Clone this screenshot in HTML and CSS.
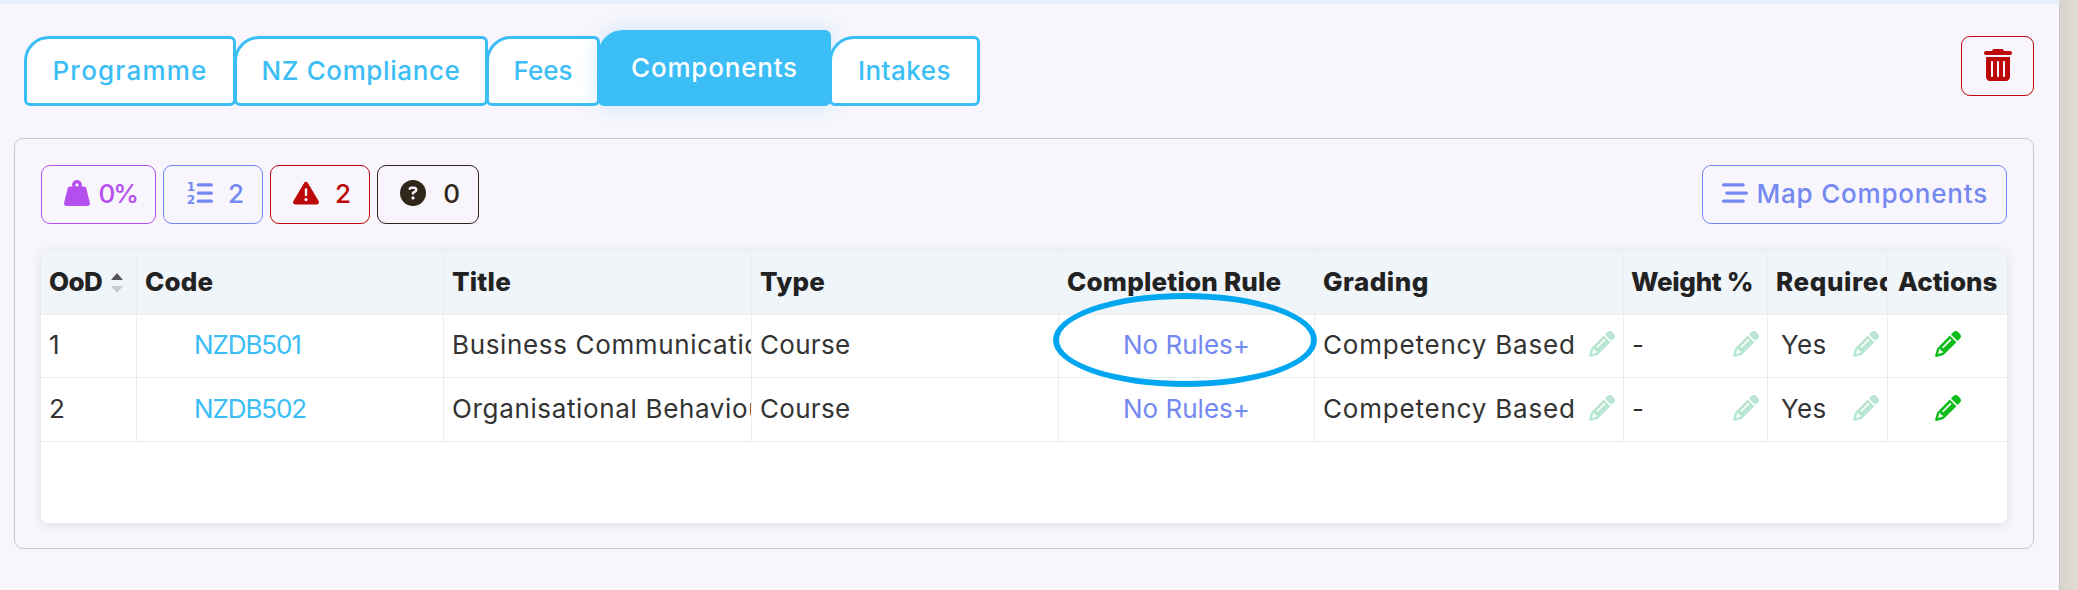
FILE: index.html
```
<!DOCTYPE html>
<html lang="en">
<head>
    <meta charset="UTF-8">
    <meta name="viewport" content="width=device-width, initial-scale=1.0">
    <title>Programme | Components</title>
    <link rel="stylesheet" href="styles.css">
</head>
<body>
    <!-- shared icons -->
    <svg class="sprite" width="0" height="0">
        <symbol id="pencil" viewBox="0 0 512 512">
            <path d="M410.3 231l11.3-11.3-33.9-33.9-62.1-62.1L291.7 89.8l-11.3 11.3-22.6 22.6L58.6 322.9c-10.4 10.4-18 23.3-22.2 37.4L1 480.7c-2.5 8.4-.2 17.5 6.1 23.7s15.3 8.5 23.7 6.1l120.3-35.4c14.1-4.2 27-11.8 37.4-22.2L387.7 253.7 410.3 231zM160 399.4l-9.1 22.7c-4 3.1-8.5 5.4-13.3 6.9L59.4 452l23-78.1c1.4-4.9 3.8-9.4 6.9-13.3l22.7-9.1v32c0 8.8 7.2 16 16 16h32zM362.7 18.7L348.3 33.2 325.7 55.8 314.3 67.1l33.9 33.9 62.1 62.1 33.9 33.9 11.3-11.3 22.6-22.6 14.5-14.5c25-25 25-65.5 0-90.5L453.3 18.7c-25-25-65.5-25-90.5 0zm-47.4 168l-144 144c-6.2 6.2-16.4 6.2-22.6 0s-6.2-16.4 0-22.6l144-144c6.2-6.2 16.4-6.2 22.6 0s6.2 16.4 0 22.6z"/>
        </symbol>
    </svg>

    <div class="page">
        <div class="topbar">
            <nav class="tabs">
                <a class="tab tab-programme">Programme</a>
                <a class="tab tab-compliance">NZ Compliance</a>
                <a class="tab tab-fees">Fees</a>
                <a class="tab tab-components active">Components</a>
                <a class="tab tab-intakes">Intakes</a>
            </nav>
            <button type="button" class="btn btn-delete" aria-label="Delete">
                <svg class="icon-trash" viewBox="0 0 448 512"><path d="M135.2 17.7C140.6 6.8 151.7 0 163.8 0H284.2c12.1 0 23.2 6.8 28.6 17.7L320 32h96c17.7 0 32 14.3 32 32s-14.3 32-32 32H32C14.3 96 0 81.7 0 64S14.3 32 32 32h96l7.2-14.3zM32 128H416V448c0 35.3-28.7 64-64 64H96c-35.3 0-64-28.7-64-64V128zm96 64c-8.8 0-16 7.2-16 16V432c0 8.8 7.2 16 16 16s16-7.2 16-16V208c0-8.8-7.2-16-16-16zm96 0c-8.8 0-16 7.2-16 16V432c0 8.8 7.2 16 16 16s16-7.2 16-16V208c0-8.8-7.2-16-16-16zm96 0c-8.8 0-16 7.2-16 16V432c0 8.8 7.2 16 16 16s16-7.2 16-16V208c0-8.8-7.2-16-16-16z"/></svg>
            </button>
        </div>

        <section class="panel">
            <div class="toolbar">
                <button type="button" class="btn stat stat-weight">
                    <svg class="icon" viewBox="0 0 512 512"><path d="M224 96a32 32 0 1 1 64 0 32 32 0 1 1 -64 0zm122.5 32c3.5-10 5.5-20.8 5.5-32c0-53-43-96-96-96s-96 43-96 96c0 11.2 1.9 22 5.5 32H120c-22 0-41.2 15-46.6 36.4l-72 288c-3.6 14.3-.4 29.5 8.7 41.2S33.2 512 48 512H464c14.8 0 28.7-6.8 37.8-18.5s12.3-26.8 8.7-41.2l-72-288C433.2 143 414 128 392 128H346.5z"/></svg>
                    <span>0%</span>
                </button>
                <button type="button" class="btn stat stat-count">
                    <svg class="icon" viewBox="0 0 512 512">
                        <text class="list-digit" x="-4" y="224">1</text>
                        <text class="list-digit" x="-4" y="482">2</text>
                        <path d="M224 64H480a32 32 0 0 1 0 64H224a32 32 0 0 1 0-64zM224 224H480a32 32 0 0 1 0 64H224a32 32 0 0 1 0-64zM224 384H480a32 32 0 0 1 0 64H224a32 32 0 0 1 0-64z"/>
                    </svg>
                    <span>2</span>
                </button>
                <button type="button" class="btn stat stat-warning">
                    <svg class="icon" viewBox="0 0 512 512"><path d="M256 32c14.2 0 27.3 7.5 34.5 19.8l216 368c7.3 12.4 7.3 27.7 .2 40.1S486.3 480 472 480H40c-14.3 0-27.6-7.7-34.7-20.1s-7-27.8 .2-40.1l216-368C228.7 39.5 241.8 32 256 32zm0 128c-13.3 0-24 10.7-24 24V296c0 13.3 10.7 24 24 24s24-10.7 24-24V184c0-13.3-10.7-24-24-24zm32 224a32 32 0 1 0 -64 0 32 32 0 1 0 64 0z"/></svg>
                    <span>2</span>
                </button>
                <button type="button" class="btn stat stat-unknown">
                    <svg class="icon" viewBox="0 0 512 512"><path d="M256 512A256 256 0 1 0 256 0a256 256 0 1 0 0 512zM169.8 165.3c7.9-22.3 29.1-37.3 52.8-37.3h58.3c34.9 0 63.1 28.3 63.1 63.1c0 22.6-12.1 43.5-31.7 54.8L280 264.4c-.2 13-10.9 23.6-24 23.6c-13.3 0-24-10.7-24-24V250.5c0-8.6 4.6-16.5 12.1-20.8l44.3-25.4c4.7-2.7 7.6-7.7 7.6-13.1c0-8.4-6.8-15.1-15.1-15.1H222.6c-3.4 0-6.4 2.1-7.5 5.3l-.4 1.2c-4.4 12.5-18.2 19-30.6 14.6s-19-18.2-14.6-30.6l.4-1.2zM224 352a32 32 0 1 1 64 0 32 32 0 1 1 -64 0z"/></svg>
                    <span>0</span>
                </button>
                <button type="button" class="btn btn-map">
                    <svg class="icon" viewBox="0 0 512 512"><path d="M0 96C0 78.3 14.3 64 32 64H416c17.7 0 32 14.3 32 32s-14.3 32-32 32H32C14.3 128 0 113.7 0 96zM64 256c0-17.7 14.3-32 32-32H480c17.7 0 32 14.3 32 32s-14.3 32-32 32H96c-17.7 0-32-14.3-32-32zM448 416c0 17.7-14.3 32-32 32H32c-17.7 0-32-14.3-32-32s14.3-32 32-32H416c17.7 0 32 14.3 32 32z"/></svg>
                    <span>Map Components</span>
                </button>
            </div>

            <div class="table-card">
                <table>
                    <colgroup>
                        <col class="col-ood">
                        <col class="col-code">
                        <col class="col-title">
                        <col class="col-type">
                        <col class="col-rule">
                        <col class="col-grading">
                        <col class="col-weight">
                        <col class="col-required">
                        <col class="col-actions">
                    </colgroup>
                    <thead>
                        <tr>
                            <th><div class="sortable">OoD <svg class="sort" viewBox="0 0 12 20"><path class="sort-up" d="M6 0L12 7H0z"/><path class="sort-down" d="M0 13H12L6 20z"/></svg></div></th>
                            <th>Code</th>
                            <th>Title</th>
                            <th>Type</th>
                            <th>Completion Rule</th>
                            <th class="grading-head">Grading</th>
                            <th class="weight-head">Weight %</th>
                            <th class="required-head">Required</th>
                            <th class="actions-head">Actions</th>
                        </tr>
                    </thead>
                    <tbody>
                        <tr>
                            <td>1</td>
                            <td class="code"><a>NZDB501</a></td>
                            <td class="title">Business Communication</td>
                            <td>Course</td>
                            <td class="rule"><a>No Rules+</a><span class="highlight"></span></td>
                            <td><div class="editable"><span class="grading">Competency Based</span><svg class="edit"><use href="#pencil"/></svg></div></td>
                            <td><div class="editable"><span>-</span><svg class="edit"><use href="#pencil"/></svg></div></td>
                            <td><div class="editable yes"><span>Yes</span><svg class="edit"><use href="#pencil"/></svg></div></td>
                            <td class="actions"><svg class="edit"><use href="#pencil"/></svg></td>
                        </tr>
                        <tr>
                            <td>2</td>
                            <td class="code"><a>NZDB502</a></td>
                            <td class="title">Organisational Behaviour</td>
                            <td>Course</td>
                            <td class="rule"><a>No Rules+</a></td>
                            <td><div class="editable"><span class="grading">Competency Based</span><svg class="edit"><use href="#pencil"/></svg></div></td>
                            <td><div class="editable"><span>-</span><svg class="edit"><use href="#pencil"/></svg></div></td>
                            <td><div class="editable yes"><span>Yes</span><svg class="edit"><use href="#pencil"/></svg></div></td>
                            <td class="actions"><svg class="edit"><use href="#pencil"/></svg></td>
                        </tr>
                    </tbody>
                </table>
            </div>
        </section>
    </div>
</body>
</html>
```
FILE: styles.css
```
:root {
    --color-sky: #3bbdf5;
    --color-indigo: #7488f2;
    --color-red: #bc0808;
    --color-purple: #b44fee;
    --color-dark: #30261a;
    --color-background: #f8f6fc;
    --color-text: #333;
}
* {
    box-sizing: border-box;
}
body {
    font-family: 'Inter', sans-serif;
    font-size: 26px;
    line-height: 1.5;
    color: var(--color-text);
    background: linear-gradient(to right, #d9d5ce 2060px, #e0dcd5 2078px);
    margin: 0;
    height: 590px;
    overflow: hidden;
}
.sprite {
    display: block;
}
.page {
    width: 2060px;
    height: 590px;
    padding: 26px 25px 0 14px;
    background-color: var(--color-background);
    border-top: 4px solid #e6f0fa;
    border-right: 1px solid #c9c8cd;
}
svg {
    fill: currentColor;
    flex: none;
}

/* Tabs */
.topbar {
    display: flex;
    justify-content: space-between;
    align-items: flex-start;
    height: 108px;
}
.tabs {
    display: flex;
    align-items: flex-end;
    height: 76px;
    padding-left: 10px;
}
.tab {
    display: flex;
    align-items: center;
    justify-content: center;
    height: 70px;
    padding-bottom: 1px;
    border: 3px solid var(--color-sky);
    border-radius: 25px 6px 6px 6px;
    background-color: white;
    color: var(--color-sky);
    font-weight: 500;
    white-space: nowrap;
}
.tab + .tab {
    margin-left: -2px;
}
.tab-programme {
    width: 212px;
    letter-spacing: 1.2px;
}
.tab-compliance {
    width: 254px;
    letter-spacing: 0.6px;
}
.tab-fees {
    width: 114px;
}
.tab-components {
    width: 233px;
    letter-spacing: 0.8px;
}
.tab-intakes {
    width: 151px;
    letter-spacing: 0.5px;
}
.tab.active {
    height: 76px;
    background-color: var(--color-sky);
    color: white;
    box-shadow: 0 0 20px rgba(59, 189, 245, 0.25);
}

/* Buttons */
.btn {
    display: flex;
    align-items: center;
    height: 59px;
    padding: 0;
    border: 1px solid currentColor;
    border-radius: 9px;
    background: none;
    font: inherit;
    font-weight: 500;
    white-space: nowrap;
}
.btn-delete {
    width: 73px;
    height: 60px;
    margin-top: 6px;
    padding-bottom: 2px;
    justify-content: center;
    color: var(--color-red);
}
.icon {
    width: 26px;
    height: 26px;
}
.icon-trash {
    width: 28px;
    height: 32px;
}
.toolbar {
    display: flex;
    gap: 7px;
    height: 59px;
}
.stat {
    width: 100px;
    padding: 0 18px 3px 22px;
    justify-content: space-between;
}
.stat-weight {
    width: 115px;
    color: var(--color-purple);
    letter-spacing: -2px;
}
.stat-count {
    padding-left: 23px;
    color: var(--color-indigo);
}
.stat-warning {
    color: var(--color-red);
}
.stat-unknown {
    width: 102px;
    color: var(--color-dark);
}
.list-digit {
    font-family: 'DejaVu Sans', sans-serif;
    font-size: 240px;
    font-weight: 700;
    letter-spacing: 0;
}
.btn-map {
    width: 305px;
    margin-left: auto;
    padding: 0 18px 3px 19px;
    justify-content: space-between;
    color: var(--color-indigo);
    letter-spacing: 0.8px;
}

/* Components table */
.panel {
    height: 411px;
    padding: 26px;
    border: 1px solid #c9c8cd;
    border-radius: 9px;
}
.table-card {
    height: 273px;
    margin-top: 26px;
    border-radius: 6px;
    background-color: white;
    box-shadow: 0 2px 10px rgba(60, 40, 80, 0.13);
}
table {
    width: 1966px;
    table-layout: fixed;
    border-collapse: separate;
    border-spacing: 0;
}
.col-ood {
    width: 96px;
}
.col-code, .col-type {
    width: 307px;
}
.col-title {
    width: 308px;
}
.col-rule {
    width: 256px;
}
.col-grading {
    width: 309px;
}
.col-weight {
    width: 144px;
}
.col-required {
    width: 120px;
}
.col-actions {
    width: 119px;
}
th, td {
    height: 64px;
    padding: 0 0 2px 8px;
    border-right: 1px solid #ebedef;
    border-bottom: 1px solid #e0f0f7;
    text-align: left;
    white-space: nowrap;
    overflow: hidden;
}
th:last-child, td:last-child {
    border-right: none;
}
th {
    height: 65px;
    border-top: 1px solid #ececee;
    border-bottom-color: #ebedef;
    background-color: #f0f5fa;
    color: #222;
    font-weight: 800;
    letter-spacing: 0.2px;
}
th:first-child {
    border-top-left-radius: 6px;
    letter-spacing: -0.6px;
}
th:last-child {
    border-top-right-radius: 6px;
}
.grading-head {
    letter-spacing: 0.5px;
}
.weight-head {
    padding-left: 7px;
    letter-spacing: -0.3px;
}
.required-head {
    letter-spacing: 0.6px;
}
.actions-head {
    padding-left: 10px;
    letter-spacing: 0;
}
td {
    letter-spacing: 0.3px;
}
tbody tr:first-child td {
    height: 63px;
    padding-bottom: 3px;
}
.sortable {
    display: flex;
    align-items: center;
    gap: 9px;
}
.sort {
    width: 12px;
    height: 20px;
    margin-top: 3px;
}
.sort-up {
    fill: #555;
}
.sort-down {
    fill: #c8cacc;
}
.code {
    padding-left: 57px;
    color: var(--color-sky);
    letter-spacing: -1.1px;
}
.title {
    letter-spacing: 0.65px;
}
.grading {
    letter-spacing: 0.8px;
}
.rule {
    position: relative;
    padding-left: 0;
    text-align: center;
    color: var(--color-indigo);
    letter-spacing: 0;
    overflow: visible;
}
/* ring drawn over the cell and its neighbours */
.highlight {
    position: absolute;
    left: -6px;
    top: -22px;
    width: 264px;
    height: 94px;
    border: 6px solid #00a7f0;
    border-radius: 50%;
}
.editable {
    display: flex;
    align-items: center;
    justify-content: space-between;
    padding-right: 8px;
}
.yes {
    padding-left: 5px;
}
.edit {
    width: 26px;
    height: 26px;
    margin-top: -1px;
    color: #b8e6d2;
}
.actions {
    padding-left: 0;
    text-align: center;
}
.actions .edit {
    display: block;
    margin: -1px auto 0;
    color: #10bd1c;
}
```
